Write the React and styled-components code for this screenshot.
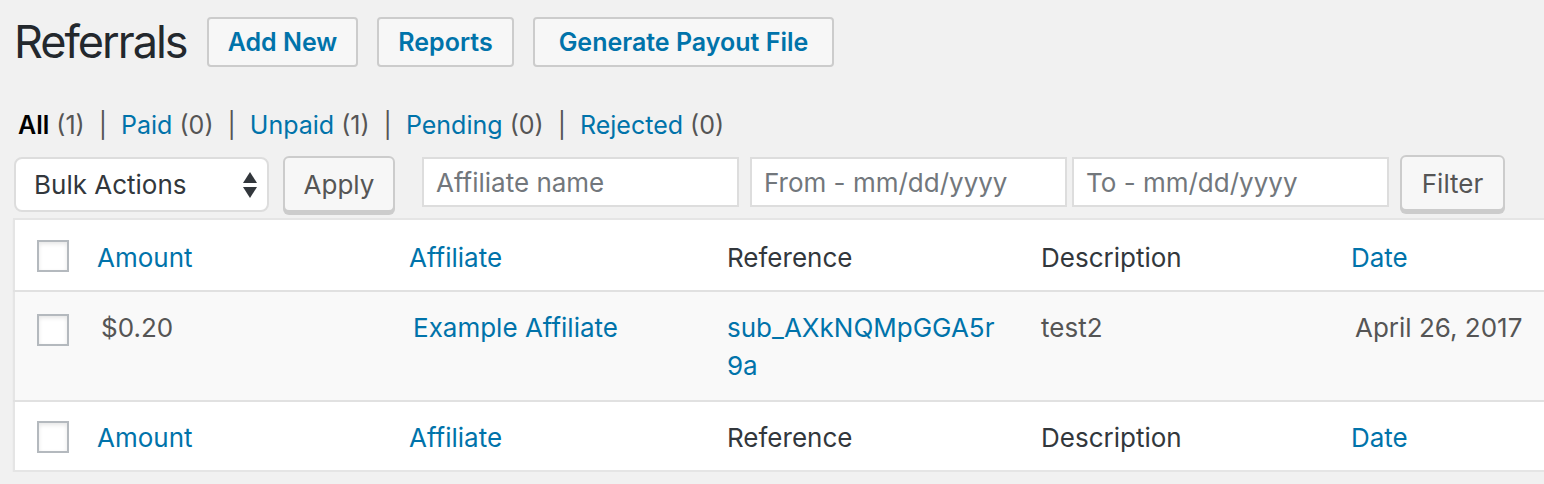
import React from 'react';
import styled, { createGlobalStyle } from 'styled-components';

const GlobalStyle = createGlobalStyle`
  html, body {
    margin: 0;
    padding: 0;
    background: #f1f1f1;
    overflow: hidden;
  }
  body {
    font-family: Inter, "Noto Sans", "Liberation Sans", sans-serif;
    color: #444;
  }
`;

const Wrap = styled.div`
  padding: 17px 0 0 14px;
  width: 1800px;
`;

const TitleRow = styled.div`
  display: flex;
  align-items: center;
  gap: 19px;
  height: 50px;
`;

const Title = styled.h1`
  margin: 0 1px 0 0;
  font-size: 45px;
  font-weight: 400;
  color: #23282d;
  letter-spacing: -2px;
  line-height: 50px;
`;

const PageButton = styled.a`
  display: inline-flex;
  align-items: center;
  height: 50px;
  box-sizing: border-box;
  padding: 0 ${(p) => p.$pad || 19}px;
  border: 2px solid #ccc;
  border-radius: 4px;
  background: #f7f7f7;
  color: #0073aa;
  font-size: 25px;
  font-weight: 600;
  text-decoration: none;
`;

const Views = styled.ul`
  display: flex;
  align-items: center;
  margin: 41px 0 0 4px;
  padding: 0;
  list-style: none;
  font-size: 25px;
  line-height: 34px;
  color: #555;
`;

const View = styled.li`
  a {
    color: ${(p) => (p.$current ? '#000' : '#0073aa')};
    font-weight: ${(p) => (p.$current ? 600 : 400)};
    text-decoration: none;
  }
`;

const Sep = styled.span`
  margin: 0 14px;
`;

const Count = styled.span`
  color: #555;
`;

const Tablenav = styled.div`
  display: flex;
  align-items: flex-start;
  margin-top: 14px;
  height: 62px;
`;

const Select = styled.div`
  display: flex;
  align-items: center;
  justify-content: space-between;
  box-sizing: border-box;
  width: 255px;
  height: 55px;
  padding: 0 10px 0 18px;
  margin-top: 1px;
  border: 2px solid #ddd;
  border-radius: 8px;
  background: #fff;
  color: #32373c;
  font-size: 26px;
`;

const Button = styled.button`
  box-sizing: border-box;
  height: 56px;
  margin-top: ${(p) => p.$top || 0}px;
  margin-left: ${(p) => p.$ml || 0}px;
  width: ${(p) => p.$w}px;
  border: 2px solid #ccc;
  border-radius: 6px;
  background: #f7f7f7;
  box-shadow: 0 3px 0 #ccc;
  color: #555;
  font-family: inherit;
  font-size: 26px;
  padding: 0;
`;

const Input = styled.div`
  display: flex;
  align-items: center;
  box-sizing: border-box;
  width: 317px;
  height: 50px;
  margin: 1px 0 0 ${(p) => p.$ml || 0}px;
  padding: 0 12px;
  border: 2px solid #ddd;
  background: #fff;
  color: #72777c;
  font-size: 26px;
`;

const Table = styled.table`
  margin-left: -1px;
  border-collapse: collapse;
  border: 2px solid #e5e5e5;
  background: #fff;
  box-shadow: 0 2px 2px rgba(0, 0, 0, 0.04);
  table-layout: fixed;
  width: 1670px;
  font-size: 26px;
`;

const HeadCell = styled.th`
  text-align: left;
  font-weight: 400;
  height: ${(p) => (p.$foot ? 70 : 72)}px;
  box-sizing: border-box;
  padding: ${(p) => (p.$foot ? '2px' : '4px')} ${(p) => (p.$sortable ? 16 : 20)}px 0;
  color: ${(p) => (p.$sortable ? '#0073aa' : '#32373c')};
  border-${(p) => (p.$foot ? 'top' : 'bottom')}: 2px solid #e1e1e1;
  vertical-align: middle;
`;

const CheckCell = styled.td`
  width: 67px;
  padding: ${(p) => (p.$top ? 22 : 2)}px 0 0 22px;
  box-sizing: border-box;
  vertical-align: ${(p) => (p.$top ? 'top' : 'middle')};
  border-top: ${(p) => (p.$foot ? '2px solid #e1e1e1' : 'none')};
  border-bottom: ${(p) => (p.$head ? '2px solid #e1e1e1' : 'none')};
`;

const Checkbox = styled.span`
  display: block;
  width: 32px;
  height: 32px;
  box-sizing: border-box;
  border: 2px solid #b4b9be;
  background: #fff;
  box-shadow: inset 0 2px 4px rgba(0, 0, 0, 0.1);
`;

const Row = styled.tr`
  background: #f9f9f9;
`;

const Cell = styled.td`
  vertical-align: top;
  padding: 17px 20px 15px;
  line-height: 38px;
  color: ${(p) => (p.$link ? '#0073aa' : '#555')};
  word-break: break-all;
`;

const Arrows = () => (
  <svg width="14" height="26" viewBox="0 0 14 26">
    <path d="M7 0 L14 11 L0 11 Z" fill="#32373c" />
    <path d="M0 15 L14 15 L7 26 Z" fill="#32373c" />
  </svg>
);

const columns = [
  { label: 'Amount', sortable: true, width: 312 },
  { label: 'Affiliate', sortable: true, width: 314 },
  { label: 'Reference', width: 314 },
  { label: 'Description', width: 314 },
  { label: 'Date', sortable: true },
];

const views = [
  { label: 'All', count: 1, current: true },
  { label: 'Paid', count: 0 },
  { label: 'Unpaid', count: 1 },
  { label: 'Pending', count: 0 },
  { label: 'Rejected', count: 0 },
];

const HeaderRow = ({ foot }) => (
  <tr>
    <CheckCell $foot={foot} $head={!foot}>
      <Checkbox />
    </CheckCell>
    {columns.map((c) => (
      <HeadCell key={c.label} $sortable={c.sortable} $foot={foot} style={c.width ? { width: c.width } : undefined}>
        {c.label}
      </HeadCell>
    ))}
  </tr>
);

export default function App() {
  return (
    <>
      <GlobalStyle />
      <Wrap>
        <TitleRow>
          <Title>Referrals</Title>
          <PageButton href="#">Add New</PageButton>
          <PageButton href="#">Reports</PageButton>
          <PageButton href="#" $pad={24}>Generate Payout File</PageButton>
        </TitleRow>

        <Views>
          {views.map((v, i) => (
            <View key={v.label} $current={v.current}>
              <a href="#">{v.label}</a> <Count>({v.count})</Count>
              {i < views.length - 1 && <Sep>|</Sep>}
            </View>
          ))}
        </Views>

        <Tablenav>
          <Select>
            Bulk Actions
            <Arrows />
          </Select>
          <Button $w={112} $ml={14}>Apply</Button>
          <Input $ml={27}>Affiliate name</Input>
          <Input $ml={11}>From - mm/dd/yyyy</Input>
          <Input $ml={5}>To - mm/dd/yyyy</Input>
          <Button $w={105} $ml={11} $top={-1}>Filter</Button>
        </Tablenav>

        <Table>
          <thead>
            <HeaderRow />
          </thead>
          <tbody>
            <Row>
              <CheckCell $top>
                <Checkbox />
              </CheckCell>
              <Cell>$0.20</Cell>
              <Cell $link>Example Affiliate</Cell>
              <Cell $link>sub_AXkNQMpGGA5r9a</Cell>
              <Cell>test2</Cell>
              <Cell>April 26, 2017</Cell>
            </Row>
          </tbody>
          <tfoot>
            <HeaderRow foot />
          </tfoot>
        </Table>
      </Wrap>
    </>
  );
}
